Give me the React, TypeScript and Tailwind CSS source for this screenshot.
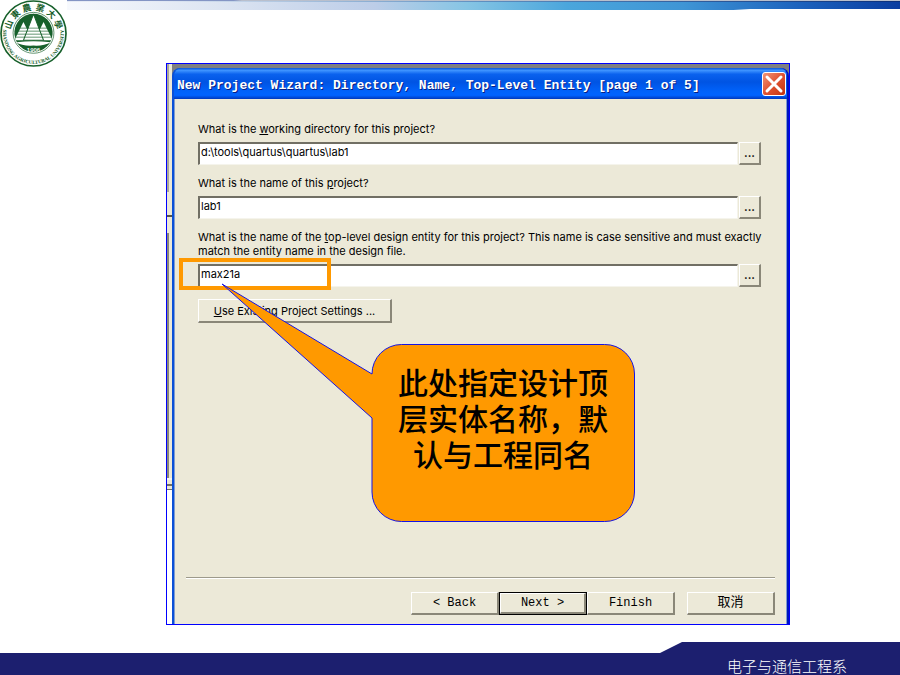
import React, { useState } from "react"
import clsx from "clsx"

interface Field {
  id: string
  label: React.ReactNode
  value: string
}

const FIELDS: Field[] = [
  {
    id: "directory",
    label: <>What is the <u>w</u>orking directory for this project?</>,
    value: "d:\\tools\\quartus\\quartus\\lab1",
  },
  {
    id: "name",
    label: <>What is the name of this <u>p</u>roject?</>,
    value: "lab1",
  },
  {
    id: "entity",
    label: (
      <>
        What is the name of the <u>t</u>op-level design entity for this project? This name is case sensitive and must exactly
        <br />
        match the entity name in the design file.
      </>
    ),
    value: "max21a",
  },
]

const SEAL_CHARS = [
  { char: "山", angle: -70 },
  { char: "東", angle: -43 },
  { char: "農", angle: -15 },
  { char: "業", angle: 15 },
  { char: "大", angle: 43 },
  { char: "學", angle: 70 },
]

const RAISED =
  "border-t border-l border-r-2 border-b-2 border-t-white border-l-white border-r-[#8a8778] border-b-[#8a8778] bg-[#ece9d8]"

export default function App() {
  return (
    <div className="flex min-h-screen flex-col bg-white font-['Inter','Liberation_Sans','Noto_Sans_CJK_SC',sans-serif] text-black">
      <header className="flex h-[63px] items-start">
        <UniversitySeal />
        <Banner />
      </header>

      <main className="mr-[110px] ml-[166px] flex flex-1 border border-[#0000ff] bg-[#808080]">
        <BackgroundEdge />
        <WizardWindow />
      </main>

      <footer className="mt-[17px] flex h-[33px] items-end justify-end bg-[#1c1f6f] pr-[53px] [clip-path:polygon(0_11px,calc(100%-240px)_11px,calc(100%-218px)_0,100%_0,100%_100%,0_100%)]">
        <span className="font-['Noto_Sans_CJK_SC',sans-serif] text-[15px] leading-[18px] font-light text-white">电子与通信工程系</span>
      </footer>
    </div>
  )
}

function Banner() {
  return (
    <div className="flex h-[10px] flex-1 flex-col">
      <div className="h-px bg-linear-to-r from-[#8495c4] from-20% to-[#b9bfcc] to-21%" />
      <div className="h-px bg-linear-to-r from-[#e6ebf5] from-10% via-[#5d8fc0] via-50% to-[#0a2f7c]" />
      <div className="flex-1 bg-[linear-gradient(90deg,#f7f9fd_0%,#dde5f2_18%,#bccde8_37%,#86c5e4_48%,#4ba6dc_60%,#3f95d5_74%,#1c62bd_88%,#0a3da0_100%)] [clip-path:polygon(0_0,100%_0,100%_7px,82%_7px,80%_100%,0_100%)]" />
    </div>
  )
}

// Strip of the main application window that shows to the left of the wizard
function BackgroundEdge() {
  return (
    <div className="flex w-[5px] shrink-0 flex-col bg-[#ece9d8]">
      <div className="h-32 border-l-2 border-[#aaa797]" />
      <div className="h-[25px] border-b-2 border-[#55534a]" />
      <div className="mt-4 h-[245px] border-l-2 border-[#8a8778]" />
      <div className="h-2 border-y-2 border-t-[#f8f7f0] border-b-[#716f64]" />
      <div className="h-1 border-b border-[#716f64]" />
      <div className="flex-1 bg-white" />
    </div>
  )
}

function WizardWindow() {
  const [values, setValues] = useState<Record<string, string>>(
    Object.fromEntries(FIELDS.map(f => [f.id, f.value]))
  )

  return (
    <section className="mt-1 flex min-w-0 flex-1 flex-col rounded-t-lg border-x-2 border-l-[#0a50d8] border-r-[#0014c0] bg-[#0855dd]">
      <div className="flex h-[31px] items-center justify-between rounded-t-lg bg-[linear-gradient(180deg,#0a55d8_0%,#3d93ff_8%,#0a62ee_20%,#0054e3_45%,#0062fa_75%,#0063ff_88%,#0038bc_100%)] pr-px pl-[3px]">
        <h1 className="pt-1 font-['Liberation_Mono',monospace] text-[13px] leading-4 font-bold whitespace-nowrap text-white [text-shadow:1px_1px_#0a1f83]">
          New Project Wizard: Directory, Name, Top-Level Entity [page 1 of 5]
        </h1>
        <button
          type="button"
          aria-label="Close"
          className="flex size-6 items-center justify-center rounded-[3px] border border-white bg-linear-to-br from-[#ee9478] via-[#df5230] to-[#c3330c]"
        >
          <svg viewBox="0 0 22 22" className="size-[22px]" fill="none" stroke="#fff" strokeWidth="3" strokeLinecap="round">
            <path d="M4 4 L18 18 M18 4 L4 18" />
          </svg>
        </button>
      </div>

      <div className="relative flex flex-1 flex-col border-x border-[#7f9ccf] bg-[#ece9d8] px-[11px] pt-[23px] pb-[9px]">
        <div className="flex flex-col gap-[11px] pr-[14px] pl-3">
          {FIELDS.map(field => (
            <div key={field.id} className="flex flex-col gap-[6px]">
              <label htmlFor={field.id} className="text-[11px] leading-[14px] whitespace-nowrap">
                {field.label}
              </label>
              <div className="flex gap-px">
                <input
                  id={field.id}
                  type="text"
                  value={values[field.id]}
                  onChange={e => setValues({ ...values, [field.id]: e.target.value })}
                  className="h-[23px] min-w-0 flex-1 border-t-2 border-r border-b border-l-2 border-t-[#716f64] border-r-[#f5f4ec] border-b-[#f5f4ec] border-l-[#716f64] bg-white px-px pb-1 text-[11px] outline-none"
                />
                <button
                  type="button"
                  aria-label="Browse"
                  className={clsx(RAISED, "h-[23px] w-[22px] text-[11px] leading-4 font-bold")}
                >
                  ...
                </button>
              </div>
            </div>
          ))}
        </div>

        <button type="button" className={clsx(RAISED, "mt-3 ml-3 h-6 w-[194px] text-[11px] leading-4")}>
          <u>U</u>se Existing Project Settings ...
        </button>

        <div className="mt-auto border-t border-[#9d9a8b] border-b border-b-white" />
        <div className="mt-[13px] flex justify-end font-['Liberation_Mono','Noto_Sans_CJK_SC',monospace] text-[12px] leading-4">
          <button type="button" className={clsx(RAISED, "h-[23px] w-[88px]")}>&lt; Back</button>
          <div className="border border-black">
            <button type="button" className={clsx(RAISED, "block h-[21px] w-[86px]")}>Next &gt;</button>
          </div>
          <button type="button" className={clsx(RAISED, "h-[23px] w-[88px]")}>Finish</button>
          <button type="button" className={clsx(RAISED, "ml-3 h-[23px] w-[88px] text-[13px]")}>取消</button>
        </div>

        <div className="pointer-events-none absolute top-[159px] left-1 h-8 w-[152px] border-4 border-[#ff9900]" />
        <Callout />
      </div>
    </section>
  )
}

function Callout() {
  return (
    <div className="pointer-events-none absolute top-[184px] left-[46px] h-[240px] w-[415px]">
      <svg viewBox="0 0 415 240" className="absolute inset-0 size-full" fill="#ff9900" stroke="#1414e6" strokeWidth="1">
        <path d="M1 1 L151 91 A29.500 29.500 0 0 1 180.500 61.500 H383.500 A29.500 29.500 0 0 1 413.500 91 V209 A29.500 29.500 0 0 1 383.500 238.500 H180.500 A29.500 29.500 0 0 1 151 209 V135 Z" />
      </svg>
      <p className="absolute top-20 left-[177px] w-[210px] text-center font-['Noto_Sans_CJK_SC',sans-serif] text-[30px] leading-9 font-medium">
        此处指定设计顶层实体名称，默认与工程同名
      </p>
    </div>
  )
}

function UniversitySeal() {
  return (
    <svg viewBox="0 0 200 200" className="size-[67px] shrink-0" role="img" aria-label="Shandong Agricultural University">
      <defs>
        <path id="seal-arc" d="M 14 70 A 91 91 0 1 0 186 70" />
        <clipPath id="seal-disc">
          <circle cx="100" cy="98" r="57" />
        </clipPath>
      </defs>
      <circle cx="100" cy="100" r="97" fill="#fff" stroke="#17602b" strokeWidth="5" />
      <circle cx="100" cy="98" r="61" fill="#fff" stroke="#17602b" strokeWidth="2" />
      <circle cx="100" cy="98" r="57" fill="#17602b" />
      <g clipPath="url(#seal-disc)">
        <g fill="#fff">
          <path d="M70 66 L97 120 H43 Z" />
          <path d="M130 66 L157 120 H103 Z" />
          <path d="M100 42 L130 120 H70 Z" stroke="#17602b" strokeWidth="3" />
          <path d="M48 126 Q100 120 152 126 Q130 138 100 136 Q66 138 48 126 Z" />
        </g>
        <g stroke="#17602b" strokeWidth="2">
          <path d="M40 84 H160 M40 93 H160 M40 102 H160 M40 111 H160" />
        </g>
      </g>
      <text x="100" y="154" textAnchor="middle" fontSize="18" fontWeight="700" fill="#fff" fontFamily="Liberation Sans, sans-serif">
        1906
      </text>
      {SEAL_CHARS.map(({ char, angle }) => (
        <text
          key={char}
          x="100"
          y="31"
          textAnchor="middle"
          fontSize="26"
          fontWeight="700"
          fill="#17602b"
          fontFamily="Noto Sans CJK TC, sans-serif"
          transform={`rotate(${angle} 100 100)`}
        >
          {char}
        </text>
      ))}
      <text fontSize="15" fontWeight="700" fill="#17602b" fontFamily="Liberation Serif, serif" textAnchor="middle">
        <textPath href="#seal-arc" startOffset="50%">SHANDONG AGRICULTURAL UNIVERSITY</textPath>
      </text>
    </svg>
  )
}
